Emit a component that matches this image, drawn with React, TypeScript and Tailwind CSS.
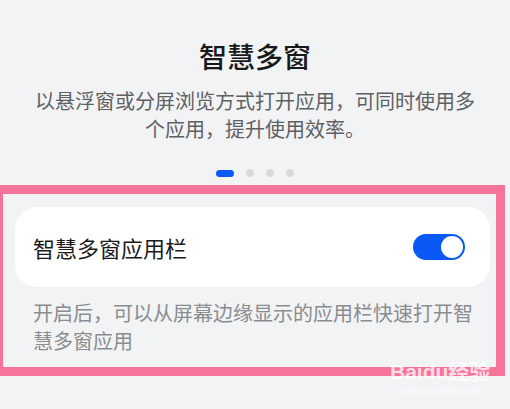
const cjk = { fontFamily: '"Noto Sans CJK SC", "Noto Sans", sans-serif' }

function Toggle({ on }: { on: boolean }) {
  return (
    <div
      className={`flex h-[26px] w-[52px] items-center rounded-full p-[2px] ${
        on ? 'justify-end bg-[#0a59f7]' : 'justify-start bg-[#d4d6d9]'
      }`}
    >
      <div className="h-[22px] w-[22px] rounded-full bg-white" />
    </div>
  )
}

function PageDots({ count, active }: { count: number; active: number }) {
  return (
    <div className="flex items-center justify-center gap-[12px]">
      {Array.from({ length: count }).map((_, i) =>
        i === active ? (
          <div key={i} className="h-[7px] w-[18px] rounded-full bg-[#0a59f7]" />
        ) : (
          <div key={i} className="h-[8px] w-[8px] rounded-full bg-[#d9dadc]" />
        )
      )}
    </div>
  )
}

export default function App() {
  return (
    <div className="relative h-[409px] w-[510px] overflow-hidden bg-[#f1f3f5]" style={cjk}>
      {/* Intro */}
      <div className="flex flex-col items-center pt-[38px]">
        <h1 className="text-[28px] leading-[36px] font-medium text-[#191919]">智慧多窗</h1>
        <p className="mt-[13px] w-[450px] text-center text-[20px] leading-[28px] text-[#5f6063]">
          以悬浮窗或分屏浏览方式打开应用，可同时使用多个应用，提升使用效率。
        </p>
        <div className="mt-[26px]">
          <PageDots count={4} active={0} />
        </div>
      </div>

      {/* Highlighted setting */}
      <div className="mt-[8px] ml-[-6px] w-[511px] border-[9px] border-[#f6739a] pt-[13px] pr-[6px] pb-[12px] pl-[12px]">
        <div className="flex h-[80px] items-center justify-between rounded-[22px] bg-white pr-[25px] pl-[18px]">
          <span className="text-[22px] text-[#1a1a1a]">智慧多窗应用栏</span>
          <Toggle on />
        </div>
        <p className="mt-[12px] pr-[8px] pl-[18px] text-[20px] leading-[28px] text-[#8b8c8f]">
          开启后，可以从屏幕边缘显示的应用栏快速打开智慧多窗应用
        </p>
      </div>

      {/* Watermark */}
      <div className="pointer-events-none absolute top-[360px] left-[390px] flex flex-col items-center whitespace-nowrap text-white/75">
        <span
          className="text-[21px] leading-[24px] font-bold"
          style={{ fontFamily: '"Liberation Sans", "Noto Sans CJK SC", sans-serif' }}
        >
          Baidu经验
        </span>
        <span className="text-[10px] leading-[13px]" style={{ fontFamily: '"Liberation Sans", sans-serif' }}>
          jingyan.baidu.com
        </span>
      </div>
    </div>
  )
}
